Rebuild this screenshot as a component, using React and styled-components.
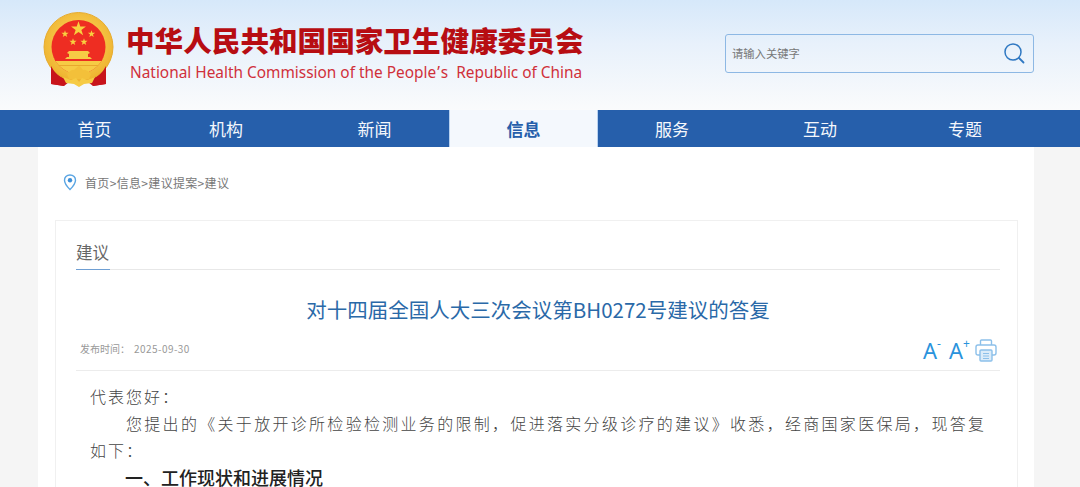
import React from "react";
import styled, { createGlobalStyle } from "styled-components";

const Global = createGlobalStyle`
  html, body { margin: 0; padding: 0; background: #f5f5f5; overflow: hidden; }
  body { font-family: "Noto Sans CJK SC", "Noto Sans", sans-serif; }
  * { box-sizing: border-box; }
`;

const Page = styled.div`
  width: 1080px;
  height: 487px;
  overflow: hidden;
`;
const Header = styled.header`
  height: 110px;
  background: linear-gradient(180deg, #d6e8fa 0%, #e8f1fb 40%, #fafbfc 100%);
  display: flex;
  align-items: flex-start;
  padding: 10px 46px 0 42px;
`;
const Brand = styled.div`
  display: flex;
  gap: 10px;
`;
const EmblemSlot = styled.div`
  width: 74px;
  height: 80px;
  flex: none;
`;
const BrandText = styled.div`
  display: flex;
  flex-direction: column;
  padding-top: 9px;
`;
const TitleCn = styled.div`
  font-size: 28.6px;
  line-height: 42px;
  font-weight: 900;
  color: #b70d12;
  white-space: nowrap;
`;
const TitleEn = styled.div`
  font-family: "Noto Sans", sans-serif;
  font-size: 15.4px;
  line-height: 23px;
  color: #d0303a;
  padding-left: 4px;
  white-space: pre;
`;
const Apostrophe = styled.span`
  margin: 0 1px;
`;
const Search = styled.div`
  margin-left: auto;
  margin-top: 24px;
  width: 309px;
  height: 39px;
  border: 1px solid #8db8e4;
  border-radius: 3px;
  display: flex;
  align-items: center;
  justify-content: space-between;
  padding: 0 8px 2px 6px;
`;
const Placeholder = styled.span`
  font-size: 11.3px;
  color: #777;
`;
const Nav = styled.nav`
  height: 37px;
  background: #265fab;
  padding-left: 37px;
  padding-right: 44px;
  display: grid;
  grid-template-columns: 115px 148px 149px 149px 148px 148px 142px;
`;
const NavItem = styled.a`
  display: flex;
  align-items: center;
  justify-content: center;
  font-size: 17px;
  color: ${p => (p.$active ? "#265fab" : "#f4f7fc")};
  font-weight: ${p => (p.$active ? 700 : 400)};
  background: ${p => (p.$active ? "#f4f8fd" : "transparent")};
  ${p => p.$active && "border-left:1px solid #b9d2f0;border-right:1px solid #b9d2f0;"}
`;
const Sheet = styled.main`
  width: 996px;
  height: 340px;
  margin-left: 38px;
  background: #fff;
  padding: 0 17px;
`;
const Crumbs = styled.div`
  height: 73px;
  display: flex;
  align-items: center;
  padding: 0 0 2px 8px;
  gap: 8px;
  font-size: 12px;
  letter-spacing: 0.33px;
  color: #777;
`;
const Card = styled.section`
  width: 963px;
  height: 300px;
  border: 1px solid #f0f0f0;
  padding: 0 17px 0 20px;
`;
const TabRow = styled.div`
  height: 49px;
  border-bottom: 1px solid #e8e8e8;
  display: flex;
  align-items: flex-end;
`;
const Tab = styled.div`
  font-size: 16.5px;
  line-height: 22px;
  height: 29px;
  width: 34px;
  margin-bottom: -1px;
  color: #666;
  border-bottom: 1px solid #6f9fd3;
  white-space: nowrap;
`;
const ArticleTitle = styled.h1`
  margin: 0;
  height: 60px;
  font-size: 20.5px;
  line-height: 25px;
  font-weight: 400;
  color: #2a69a8;
  display: flex;
  justify-content: center;
  align-items: center;
  padding-top: 19px;
`;
const Meta = styled.div`
  height: 41px;
  border-bottom: 1px solid #ececec;
  display: flex;
  align-items: center;
  justify-content: space-between;
  padding: 0 3px 3px 4px;
  font-size: 10px;
  color: #999;
`;
const MetaText = styled.div`
  display: flex;
  gap: 4px;
`;
const MetaDate = styled.span`
  letter-spacing: 0.45px;
`;
const Tools = styled.div`
  display: flex;
  align-items: center;
  gap: 6px;
  color: #2a93dc;
  padding-top: 3px;
`;
const FontTool = styled.span`
  font-family: "Noto Sans", sans-serif;
  font-size: 22px;
  line-height: 26px;
  display: inline-flex;
  width: 20px;
`;
const FontSign = styled.span`
  font-size: 12px;
  line-height: 14px;
`;
const Body = styled.article`
  padding: 12px 14px 0 14px;
  color: #444;
`;
const Para = styled.p`
  margin: 0;
  font-size: 16px;
  line-height: 27px;
  font-weight: 300;
  letter-spacing: 2px;
  text-indent: ${p => (p.$indent ? "36px" : "0")};
  text-align: justify;
`;
const Section = styled.h2`
  margin: 0;
  font-size: 18px;
  line-height: 27px;
  font-weight: 500;
  color: #222;
  padding-left: 35px;
`;

const star = "M0 -10 L2.3 -3.1 L9.5 -3.1 L3.7 1.2 L5.9 8.1 L0 3.8 L-5.9 8.1 L-3.7 1.2 L-9.5 -3.1 L-2.3 -3.1 Z";

const Emblem = () => (
  <svg width="74" height="80" viewBox="0 0 74 80">
    <defs>
      <radialGradient id="g" cx="50%" cy="45%" r="55%">
        <stop offset="0" stopColor="#ffdf68" />
        <stop offset="1" stopColor="#eeb32f" />
      </radialGradient>
      <clipPath id="inner"><circle cx="36.5" cy="37" r="27" /></clipPath>
    </defs>
    <path d="M12 56 L9 74 L22 76 L27 72 L28 63 Z" fill="#c8141b" />
    <path d="M61 56 L64 74 L51 76 L46 72 L45 63 Z" fill="#c8141b" />
    <circle cx="36.5" cy="37" r="34.5" fill="url(#g)" stroke="#e7ab2e" />
    <circle cx="36.5" cy="37" r="27" fill="#ee2d22" />
    <g clipPath="url(#inner)">
      <rect x="8" y="51" width="58" height="14" fill="#f6cb45" />
      <rect x="8" y="49" width="58" height="2" fill="#ee2d22" />
      <rect x="8" y="55" width="58" height="1" fill="#e8a92d" />
    </g>
    <path d="M25 43 L27 41 H46 L48 43 L46 44 V47 H48 L50 49 H23 L25 47 H27 V44 Z" fill="#f6cb45" />
    <path d="M9 56 Q14 66 24 70 L22 76 L9 74 Z" fill="#c8141b" />
    <path d="M64 56 Q59 66 49 70 L51 76 L64 74 Z" fill="#c8141b" />
    <path d="M25 64 Q30 59 32 60 Q36 56 37 56 Q38 56 41 60 Q44 59 49 64 L47 69 H27 Z" fill="#f3c03a" />
    <path d="M21 67 L29 70 L34 68 L37 72 L40 68 L45 70 L53 67 L50 73 L42 74 L37 77 L32 74 L24 73 Z" fill="#f6cb45" />
    <path d={star} fill="#f8d13f" transform="translate(36.5 19) scale(.78)" />
    <path d={star} fill="#f8d13f" transform="translate(23 24) scale(.38)" />
    <path d={star} fill="#f8d13f" transform="translate(49.5 24) scale(.38)" />
    <path d={star} fill="#f8d13f" transform="translate(31 32) scale(.38)" />
    <path d={star} fill="#f8d13f" transform="translate(42 32) scale(.38)" />
  </svg>
);

const SearchIcon = () => (
  <svg width="22" height="22" viewBox="0 0 22 22" fill="none" stroke="#2f78c2">
    <circle cx="10" cy="10" r="8" strokeWidth="1.5" />
    <path d="M16 16 L20.5 20.5" strokeWidth="1.8" strokeLinecap="round" />
  </svg>
);

const PinIcon = () => (
  <svg width="14" height="17" viewBox="0 0 14 17" fill="none">
    <path d="M7 1 C3.5 1 1.5 3.5 1.5 6.2 C1.5 9.5 5 13.5 7 15.5 C9 13.5 12.5 9.5 12.5 6.2 C12.5 3.5 10.5 1 7 1 Z" stroke="#5aa5e3" strokeWidth="1.4" />
    <circle cx="7" cy="6.2" r="2.2" fill="#3c8fd8" />
  </svg>
);

const PrintIcon = () => (
  <svg width="22" height="23" viewBox="0 0 22 23" fill="none" stroke="#8cc0ea" strokeWidth="1.4">
    <path d="M5.5 6 V2 Q5.5 1 6.5 1 H15.5 Q16.5 1 16.5 2 V6" />
    <path d="M5 16 H3 Q1 16 1 14 V8 Q1 6 3 6 H19 Q21 6 21 8 V14 Q21 16 19 16 H17" />
    <rect x="5" y="11" width="12" height="11" rx="1" fill="#dcecf9" />
    <path d="M8 14.5 H14 M8 17 H14 M8 19.5 H14" strokeWidth="1" />
  </svg>
);

const navItems = ["首页", "机构", "新闻", "信息", "服务", "互动", "专题"];

export default function App() {
  return (
    <Page>
      <Global />
      <Header>
        <Brand>
          <EmblemSlot><Emblem /></EmblemSlot>
          <BrandText>
            <TitleCn>中华人民共和国国家卫生健康委员会</TitleCn>
            <TitleEn>National Health Commission of the People<Apostrophe>’</Apostrophe>s  Republic of China</TitleEn>
          </BrandText>
        </Brand>
        <Search>
          <Placeholder>请输入关键字</Placeholder>
          <SearchIcon />
        </Search>
      </Header>
      <Nav>
        {navItems.map(n => (
          <NavItem key={n} $active={n === "信息"}>{n}</NavItem>
        ))}
      </Nav>
      <Sheet>
        <Crumbs>
          <PinIcon />
          <span>首页&gt;信息&gt;建议提案&gt;建议</span>
        </Crumbs>
        <Card>
          <TabRow><Tab>建议</Tab></TabRow>
          <ArticleTitle>对十四届全国人大三次会议第BH0272号建议的答复</ArticleTitle>
          <Meta>
            <MetaText><span>发布时间：</span><MetaDate>2025-09-30</MetaDate></MetaText>
            <Tools>
              <FontTool>A<FontSign>-</FontSign></FontTool>
              <FontTool>A<FontSign>+</FontSign></FontTool>
              <PrintIcon />
            </Tools>
          </Meta>
          <Body>
            <Para>代表您好：</Para>
            <Para $indent>您提出的《关于放开诊所检验检测业务的限制，促进落实分级诊疗的建议》收悉，经商国家医保局，现答复如下：</Para>
            <Section>一、工作现状和进展情况</Section>
          </Body>
        </Card>
      </Sheet>
    </Page>
  );
}
